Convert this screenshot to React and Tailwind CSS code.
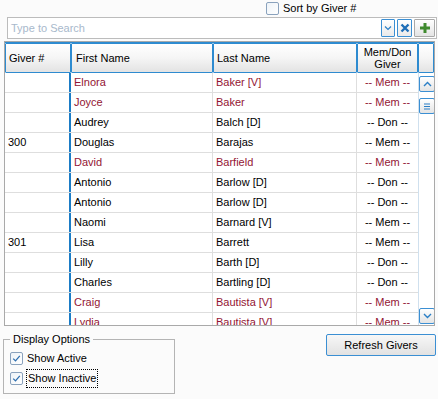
import React from 'react';

const rows = [
  { giver: '', first: 'Elnora', last: 'Baker [V]', type: 'Mem', red: true },
  { giver: '', first: 'Joyce', last: 'Baker', type: 'Mem', red: true },
  { giver: '', first: 'Audrey', last: 'Balch [D]', type: 'Don' },
  { giver: '300', first: 'Douglas', last: 'Barajas', type: 'Mem' },
  { giver: '', first: 'David', last: 'Barfield', type: 'Mem', red: true },
  { giver: '', first: 'Antonio', last: 'Barlow [D]', type: 'Don' },
  { giver: '', first: 'Antonio', last: 'Barlow [D]', type: 'Don' },
  { giver: '', first: 'Naomi', last: 'Barnard [V]', type: 'Mem' },
  { giver: '301', first: 'Lisa', last: 'Barrett', type: 'Mem' },
  { giver: '', first: 'Lilly', last: 'Barth [D]', type: 'Don' },
  { giver: '', first: 'Charles', last: 'Bartling [D]', type: 'Don' },
  { giver: '', first: 'Craig', last: 'Bautista [V]', type: 'Mem', red: true },
  { giver: '', first: 'Lydia', last: 'Bautista [V]', type: 'Mem', red: true },
];

const Check = ({ checked }) => (
  <div className="w-[13px] h-[13px] shrink-0 rounded-[2px] border border-[#8aa2bd] bg-gradient-to-br from-[#eef3f8] to-[#ffffff] flex items-center justify-center">
    {checked && (
      <svg width="9" height="9" viewBox="0 0 9 9">
        <path d="M1.2 4.6 L3.5 6.9 L7.8 1.8" fill="none" stroke="#2f6fb0" strokeWidth="1.3" />
      </svg>
    )}
  </div>
);

const ScrollBtn = ({ children, className = '' }) => (
  <div className={`w-[16px] h-[16px] rounded-[2px] border border-[#3b8fd3] bg-gradient-to-b from-white to-[#e4e4e4] flex items-center justify-center ${className}`}>
    {children}
  </div>
);

const Chevron = ({ up }) => (
  <svg width="9" height="6" viewBox="0 0 9 6">
    <path d={up ? 'M1 5 L4.5 1.5 L8 5' : 'M1 1 L4.5 4.5 L8 1'} fill="none" stroke="#2a7fc6" strokeWidth="1.4" />
  </svg>
);

const hdr = 'h-full flex items-center bg-gradient-to-b from-white via-[#f5f5f5] to-[#e3e3e3] border border-[#2e8bd0] rounded-[1px]';

export default function App() {
  return (
    <div className="w-[438px] h-[399px] bg-[#fbfbfb] text-[11px] text-black overflow-hidden font-['Liberation_Sans',Arial,sans-serif]">
      {/* sort toggle */}
      <div className="h-[17px] pl-[266px] pt-[2px] flex items-start">
        <Check />
        <span className="ml-[4px] leading-[13px]">Sort by Giver #</span>
      </div>

      {/* search box */}
      <div className="ml-[7px] w-[430px] h-[22px] border border-[#bcbcbc] bg-white flex items-center">
        <span className="flex-1 pl-[3px] text-[#a8b9cc]">Type to Search</span>
        <div className="w-[14px] h-[18px] border border-[#3b8fd3] rounded-[1px] bg-gradient-to-b from-white to-[#eaeaea] flex items-center justify-center">
          <svg width="8" height="6" viewBox="0 0 8 6">
            <path d="M1 1.5 L4 4.5 L7 1.5" fill="none" stroke="#2a7fc6" strokeWidth="1.2" />
          </svg>
        </div>
        <div className="ml-[2px] w-[15px] h-[18px] border border-[#3b8fd3] rounded-[1px] bg-gradient-to-b from-white to-[#eaeaea] flex items-center justify-center">
          <svg width="10" height="10" viewBox="0 0 10 10">
            <path d="M1.5 1.5 L8.5 8.5 M8.5 1.5 L1.5 8.5" stroke="#1f6fb8" strokeWidth="2.4" />
          </svg>
        </div>
        <div className="ml-[2px] mr-[1px] w-[21px] h-[18px] border border-[#a9a9a9] rounded-[1px] bg-gradient-to-b from-white to-[#e4e4e4] flex items-center justify-center">
          <svg width="12" height="12" viewBox="0 0 12 12">
            <path d="M6 1 V11 M1 6 H11" stroke="#3f8a2e" strokeWidth="3" />
          </svg>
        </div>
      </div>

      {/* grid */}
      <div className="ml-[4px] mt-[2px] w-[431px] h-[285px] border border-[#a9a9a9] bg-white flex flex-col overflow-hidden">
        <div className="h-[31px] flex shrink-0 border-t border-[#2e8bd0]">
          <div className={`${hdr} w-[66px] pl-[3px]`}>Giver #</div>
          <div className={`${hdr} w-[142px] pl-[4px]`}>First Name</div>
          <div className={`${hdr} w-[144px] pl-[3px]`}>Last Name</div>
          <div className={`${hdr} w-[61px] justify-center text-center leading-[12px]`}>
            Mem/Don
            <br />
            Giver
          </div>
          <div className={`${hdr} w-[16px]`} />
        </div>

        <div className="flex-1 flex overflow-hidden">
          <div className="w-[413px]">
            {rows.map((r, i) => (
              <div
                key={i}
                className={`h-[20px] flex border-b border-[#dedede] ${r.red ? 'text-[#931533]' : 'text-black'}`}
              >
                <div className="w-[66px] pl-[3px] flex items-center border-r-2 border-[#1b7cc6] text-black">{r.giver}</div>
                <div className="w-[142px] pl-[3px] flex items-center border-r border-[#dedede]">{r.first}</div>
                <div className="w-[144px] pl-[3px] flex items-center border-r border-[#dedede]">{r.last}</div>
                <div className="w-[61px] flex items-center justify-center">-- {r.type} --</div>
              </div>
            ))}
          </div>
          <div className="w-[16px] flex flex-col border-l border-[#cfe0ee] bg-white">
            <ScrollBtn className="mt-[3px]">
              <Chevron up />
            </ScrollBtn>
            <ScrollBtn className="mt-[6px]">
              <svg width="8" height="7" viewBox="0 0 8 7">
                <path d="M1 1 H7 M1 3.5 H7 M1 6 H7" stroke="#2a7fc6" strokeWidth="1" />
              </svg>
            </ScrollBtn>
            <div className="flex-1" />
            <ScrollBtn className="mb-[1px]">
              <Chevron />
            </ScrollBtn>
          </div>
        </div>
      </div>

      {/* bottom */}
      <div className="flex items-start justify-between pl-[3px] pr-[2px] mt-[3px]">
        <fieldset className="mt-[4px] w-[172px] h-[61px] border border-[#b4b4b4] px-[6px]">
          <legend className="px-[3px] leading-[13px]">Display Options</legend>
          <div className="flex items-center mt-[4px]">
            <Check checked />
            <span className="ml-[4px]">Show Active</span>
          </div>
          <div className="flex items-center mt-[2px]">
            <Check checked />
            <span className="ml-[3px] px-[1px] py-[2px] border border-dotted border-black leading-[13px]">Show Inactive</span>
          </div>
        </fieldset>
        <button className="mt-[5px] w-[110px] h-[22px] border border-[#3b8fd3] rounded-[2px] bg-gradient-to-b from-[#f7f7f7] to-[#e2e2e2] text-[11px]">
          Refresh Givers
        </button>
      </div>
    </div>
  );
}
